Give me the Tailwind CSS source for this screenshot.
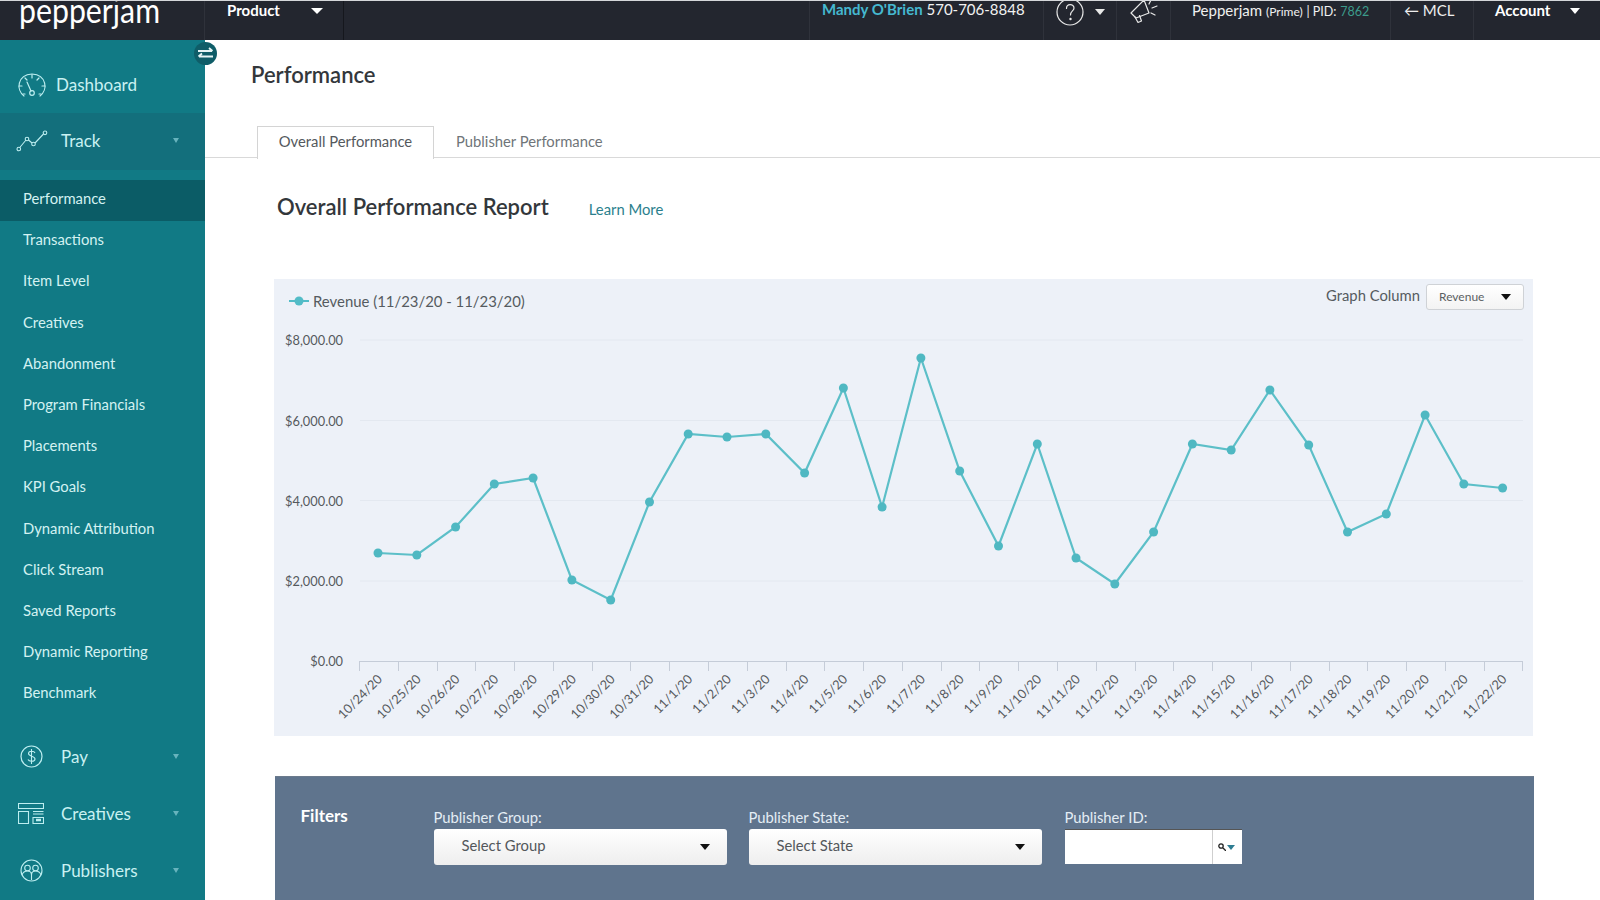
<!DOCTYPE html>
<html lang="en">
<head>
    <meta charset="UTF-8">
    <meta name="viewport" content="width=device-width, initial-scale=1.0">
    <title>Performance - Pepperjam</title>
    <script src="https://cdn.jsdelivr.net/npm/@tailwindcss/browser@4"></script>
</head>
<body class="bg-white h-[900px] overflow-hidden [font-family:Lato,sans-serif] text-[#3c4043]">
    <!-- Top bar -->
    <header class="h-10 bg-[#23262f] border-t border-[#d5d7da] flex items-start text-white overflow-hidden">
        <div class="w-[205px] h-full pl-[19px] shrink-0 border-r border-[#2f323b]">
            <span class="block text-[34px] font-normal leading-none -mt-[8px] scale-x-[0.89] origin-left">pepperjam</span>
        </div>
        <div class="w-[139px] h-full pl-[22px] flex shrink-0 border-r border-[#15171d]">
            <span class="text-[15px] font-bold leading-[18px]">Product</span>
            <span class="ml-[31px] mt-[7px] w-0 h-0 border-x-[6px] border-x-transparent border-t-[6px] border-t-white"></span>
        </div>
        <div class="flex-1"></div>
        <div class="w-[234px] h-full pl-[12px] border-l border-[#2f323b] shrink-0 text-[15px] leading-[16px] whitespace-nowrap">
            <span class="font-bold text-[#45b8d0]">Mandy O'Brien</span> <span class="text-[#f2f2f2]">570-706-8848</span>
        </div>
        <div class="w-[73px] h-full pl-[12px] border-l border-[#2f323b] flex shrink-0">
            <svg class="w-[30px] h-[30px] -mt-[3px]" viewBox="0 0 30 30" fill="none" stroke="#e8e8e8" stroke-width="1.2"><circle cx="14" cy="14" r="13"/><path d="M10.5 10.5c0-5 7.5-5 7.5-.5 0 3-3.5 3-3.5 7" stroke-linecap="round"/><circle cx="14.5" cy="21" r=".6" fill="#e8e8e8"/></svg>
            <span class="ml-[9px] mt-[8px] w-0 h-0 border-x-[5.5px] border-x-transparent border-t-[6px] border-t-[#e8e8e8]"></span>
        </div>
        <div class="w-[54px] h-full pl-[12px] border-l border-[#2f323b] shrink-0">
            <svg class="w-[32px] h-[26px] -mt-[3px]" viewBox="0 0 32 26" fill="none" stroke="#e8e8e8" stroke-width="1.2" stroke-linejoin="round" stroke-linecap="round"><path d="M2 15 15 2l5 13-13 5-5-5Z"/><path d="M6 19l3 5.500 3.500-1.500-2-5.500"/><path d="M20 6l2-4M23 10l5-2M22 15l4 2"/></svg>
        </div>
        <div class="w-[220px] h-full pl-[21px] border-l border-[#2f323b] shrink-0 text-[15px] leading-[18px] whitespace-nowrap text-[#f0f0f0]">
            Pepperjam <span class="text-[12px]">(Prime)</span> <span class="text-[12.5px]">| PID:</span> <span class="text-[12.5px] text-[#3c9b8b]">7862</span>
        </div>
        <div class="w-[83px] h-full pl-[13px] border-l border-[#2f323b] shrink-0 text-[15px] leading-[19px] whitespace-nowrap text-[#eeeeee]">&#8592; MCL</div>
        <div class="w-[127px] h-full pl-[21px] border-l border-[#2f323b] flex whitespace-nowrap shrink-0">
            <span class="text-[15px] font-bold leading-[19px]">Account</span>
            <span class="ml-[20px] mt-[7px] w-0 h-0 border-x-[5.5px] border-x-transparent border-t-[6px] border-t-white"></span>
        </div>
    </header>

    <div class="flex h-[860px]">
        <!-- Sidebar -->
        <aside class="relative w-[205px] shrink-0 bg-[#117a85] text-[#c9f1f2]">
            <span class="absolute -right-[12px] top-[2px] z-10 w-[23px] h-[23px] rounded-full bg-[#0f5d68] flex items-center justify-center">
                <svg class="w-[17px] h-[13px]" viewBox="0 0 17 13" fill="none" stroke="#e6f5f5" stroke-width="1.800"><path d="M1 4h14M12 1l3.500 3M16 9.500H2M5 6.500l-3.500 3"/></svg>
            </span>

            <a class="flex items-center h-[73px] pt-[16px] pl-[17px] text-[17px]">
                <svg class="w-[30px] h-[24px] mr-[9px]" viewBox="0 0 30 24" fill="none" stroke="#bdeef0" stroke-width="1.200" stroke-linecap="round"><path d="M7 23c-8-6-7-21 8-22 15 1 16 16 8 22"/><path d="M15 2v3M8 5l2 2M22 5l-2 2M2 13h3M28 13h-3M10 9l4 9"/><circle cx="15" cy="20" r="2.300"/><path d="M6 21h2M22 21h2"/></svg>
                Dashboard
            </a>
            <a class="flex items-center h-[57px] pb-[2px] pl-[16px] text-[17px] bg-[#136f7c]">
                <svg class="w-[32px] h-[22px] mr-[13px]" viewBox="0 0 32 22" fill="none" stroke="#bdeef0" stroke-width="1.100"><path d="M3.800 17.500 10 10M12.500 10l3.500 3M19 13l8.500-9"/><circle cx="2.800" cy="19" r="1.800"/><circle cx="11" cy="9" r="1.800"/><circle cx="17.500" cy="14" r="1.800"/><circle cx="29" cy="2.800" r="1.800"/></svg>
                Track
                <span class="ml-auto mr-[26px] w-0 h-0 border-x-[3.5px] border-x-transparent border-t-[5px] border-t-[#67b3bd]"></span>
            </a>

            <nav class="pt-[10px] pb-[12.5px] text-[14.8px] text-[#d4f2f2]">
                <a class="flex items-center h-[41.2px] pb-[5px] pl-[23px] bg-[#0b5c66]">Performance</a>
                <a class="flex items-center h-[41.2px] pb-[5px] pl-[23px]">Transactions</a>
                <a class="flex items-center h-[41.2px] pb-[5px] pl-[23px]">Item Level</a>
                <a class="flex items-center h-[41.2px] pb-[5px] pl-[23px]">Creatives</a>
                <a class="flex items-center h-[41.2px] pb-[5px] pl-[23px]">Abandonment</a>
                <a class="flex items-center h-[41.2px] pb-[5px] pl-[23px]">Program Financials</a>
                <a class="flex items-center h-[41.2px] pb-[5px] pl-[23px]">Placements</a>
                <a class="flex items-center h-[41.2px] pb-[5px] pl-[23px]">KPI Goals</a>
                <a class="flex items-center h-[41.2px] pb-[5px] pl-[23px]">Dynamic Attribution</a>
                <a class="flex items-center h-[41.2px] pb-[5px] pl-[23px]">Click Stream</a>
                <a class="flex items-center h-[41.2px] pb-[5px] pl-[23px]">Saved Reports</a>
                <a class="flex items-center h-[41.2px] pb-[5px] pl-[23px]">Dynamic Reporting</a>
                <a class="flex items-center h-[41.2px] pb-[5px] pl-[23px]">Benchmark</a>
            </nav>

            <a class="flex items-center h-[57px] pl-[20px] text-[17px]">
                <svg class="w-[23px] h-[23px] mr-[18px]" viewBox="0 0 23 23" fill="none" stroke="#bdeef0" stroke-width="1.200"><circle cx="11.500" cy="11.500" r="10.500"/><path d="M15 8c-1-2.500-6.500-2.500-6.500.5s6.500 2.500 6.500 5.500-6 3-7 .5M11.500 4v15" stroke-width="1.100"/></svg>
                Pay
                <span class="ml-auto mr-[26px] w-0 h-0 border-x-[3.5px] border-x-transparent border-t-[5px] border-t-[#67b3bd]"></span>
            </a>
            <a class="flex items-center h-[57px] pl-[18px] text-[17px]">
                <svg class="w-[26px] h-[21px] mr-[17px]" viewBox="0 0 26 21" fill="none" stroke="#bdeef0" stroke-width="1.100"><path d="M.5.500h25v5H.5zM.5 8.500h10v12H.5zM15 8.500h10.500M15 11h10.500M15 14.500h10.500v6H15z"/><path d="M18 17h5" stroke-width="2.500"/></svg>
                Creatives
                <span class="ml-auto mr-[26px] w-0 h-0 border-x-[3.5px] border-x-transparent border-t-[5px] border-t-[#67b3bd]"></span>
            </a>
            <a class="flex items-center h-[57px] pl-[20px] text-[17px]">
                <svg class="w-[23px] h-[23px] mr-[18px]" viewBox="0 0 23 23" fill="none" stroke="#bdeef0" stroke-width="1.100"><circle cx="11.500" cy="11.500" r="10.500"/><circle cx="7.500" cy="9" r="2.800"/><circle cx="15.500" cy="9" r="2.800"/><path d="M2 16c1-3 3-4 5.500-4s4 1.500 4 4v5M21 16c-1-3-3-4-5.500-4s-4 1.500-4 4"/></svg>
                Publishers
                <span class="ml-auto mr-[26px] w-0 h-0 border-x-[3.5px] border-x-transparent border-t-[5px] border-t-[#67b3bd]"></span>
            </a>
        </aside>

        <!-- Main content -->
        <main class="flex-1 min-w-0">
            <h1 class="pl-[46px] pt-[20px] text-[22px] leading-[30px] font-semibold text-[#33373b]">Performance</h1>

            <div class="mt-[36px] h-[32px] pl-[52px] flex border-b border-[#d9d9d9] text-[14.8px]">
                <a class="h-[33px] w-[177px] pb-[3px] flex items-center justify-center bg-white border border-b-0 border-[#d4d4d4] text-[#54595d]">Overall Performance</a>
                <a class="h-[32px] ml-[22px] pb-[1px] flex items-center text-[#6f7579]">Publisher Performance</a>
            </div>

            <div class="pl-[72px] pt-[29px] flex items-center h-[65px] mt-[1px]">
                <h2 class="text-[22px] font-semibold text-[#33373b]">Overall Performance Report</h2>
                <a class="ml-[40px] mt-[6px] text-[14.8px] text-[#2b7f8d]">Learn More</a>
            </div>

            <!-- Chart panel -->
            <section class="mt-[55px] ml-[69px] w-[1259px] h-[457px] bg-[#edf1f8]">
                <div class="h-[52px] pl-[15px] pr-[9px] pt-[5px] flex items-start justify-between">
                    <div class="flex items-center mt-[6px] text-[14.9px] text-[#555b60]">
                        <svg class="w-[20px] h-[10px] mr-[4px]" viewBox="0 0 20 10"><path d="M0 5h20" stroke="#52bcc7" stroke-width="2"/><circle cx="10" cy="5" r="4.500" fill="#52bcc7"/></svg>
                        Revenue (11/23/20 - 11/23/20)
                    </div>
                    <div class="flex items-center">
                        <span class="text-[14.8px] text-[#555b60] mr-[6px] -mt-[3px]">Graph Column</span>
                        <div class="w-[98px] h-[26px] pb-[1px] pl-[12px] pr-[12px] flex items-center justify-between bg-gradient-to-b from-white to-[#f3f3f3] border border-[#cfd2d6] rounded-[3px] text-[12px] text-[#5b5f63]">
                            Revenue
                            <span class="w-0 h-0 border-x-[5.5px] border-x-transparent border-t-[6px] border-t-[#111]"></span>
                        </div>
                    </div>
                </div>
                <svg id="chart" class="block w-[1259px] h-[405px]" viewBox="274 331 1259 405"></svg>
            </section>

            <!-- Filters -->
            <section class="mt-[40px] ml-[69.500px] w-[1259px] h-[124px] bg-[#5f748d] border-t border-[#6b7a8c] flex items-start text-white">
                <h3 class="ml-[26px] mt-[29px] w-[133px] text-[17px] leading-[20px] font-bold">Filters</h3>
                <div class="mt-[30px] w-[293px]">
                    <label class="block text-[14.8px] leading-[20px] text-[#e4edf5]">Publisher Group:</label>
                    <div class="h-[36px] mt-[2px] pb-[3px] pl-[28px] pr-[17px] flex items-center justify-between rounded-[3px] bg-gradient-to-b from-white to-[#eeeeee] text-[14.8px] text-[#53575b]">
                        Select Group
                        <span class="mt-[3px] w-0 h-0 border-x-[5.5px] border-x-transparent border-t-[6px] border-t-[#111]"></span>
                    </div>
                </div>
                <div class="mt-[30px] ml-[22px] w-[293px]">
                    <label class="block text-[14.8px] leading-[20px] text-[#e4edf5]">Publisher State:</label>
                    <div class="h-[36px] mt-[2px] pb-[3px] pl-[28px] pr-[17px] flex items-center justify-between rounded-[3px] bg-gradient-to-b from-white to-[#eeeeee] text-[14.8px] text-[#53575b]">
                        Select State
                        <span class="mt-[3px] w-0 h-0 border-x-[5.5px] border-x-transparent border-t-[6px] border-t-[#111]"></span>
                    </div>
                </div>
                <div class="mt-[30px] ml-[23px] w-[177px]">
                    <label class="block text-[14.8px] leading-[20px] text-[#e4edf5]">Publisher ID:</label>
                    <div class="h-[35px] mt-[2px] flex bg-white border-t border-[#555]">
                        <div class="w-[148px] border-r border-[#cfcfcf]"></div>
                        <div class="flex-1 flex items-center pl-[5px]">
                            <svg class="w-[8px] h-[8px]" viewBox="0 0 8 8" fill="none" stroke="#222" stroke-width="1.300"><circle cx="3" cy="3" r="2.200"/><path d="M5 5l3 3"/></svg>
                            <span class="ml-[1px] w-0 h-0 border-x-[4px] border-x-transparent border-t-[5px] border-t-[#2e7d92]"></span>
                        </div>
                    </div>
                </div>
            </section>
        </main>
    </div>

    <script>
        // Chart data, one value per day, in page pixels
        const days = ['10/24/20','10/25/20','10/26/20','10/27/20','10/28/20','10/29/20','10/30/20','10/31/20','11/1/20','11/2/20','11/3/20','11/4/20','11/5/20','11/6/20','11/7/20','11/8/20','11/9/20','11/10/20','11/11/20','11/12/20','11/13/20','11/14/20','11/15/20','11/16/20','11/17/20','11/18/20','11/19/20','11/20/20','11/21/20','11/22/20'];
        const ys = [553,555,527,484,478,580,600,502,434,437,434,473,388,507,358,471,546,444,558,584,532,444,450,390,445,532,514,415,484,488];
        const grid = [['$8,000.00',340],['$6,000.00',420.5],['$4,000.00',500.5],['$2,000.00',581],['$0.00',661]];

        const step = 38.78;
        let out = '';

        grid.forEach(([label, y]) => {
            if (y !== 661) out += `<path d="M360 ${y}H1523" stroke="#e3e8f0"/>`;
            out += `<text x="343" y="${y + 5}" text-anchor="end" font-size="12.8" fill="#55595d">${label}</text>`;
        });

        // x axis and ticks
        out += '<path d="M359 661.500H1523" stroke="#c5ccd8"/>';
        for (let i = 0; i <= 30; i++) {
            const x = Math.round(359 + step * i) + 0.5;
            out += `<path d="M${x} 661V671" stroke="#c5ccd8"/>`;
        }
        days.forEach((d, i) => {
            const x = 378 + step * i + 5;
            out += `<text x="${x}" y="680" text-anchor="end" font-size="12.8" fill="#55595d" transform="rotate(-45 ${x} 680)">${d}</text>`;
        });

        // revenue line
        const pts = ys.map((y, i) => `${(378 + step * i).toFixed(1)},${y}`);
        out += `<polyline points="${pts.join(' ')}" fill="none" stroke="#5cbfc8" stroke-width="2.200"/>`;
        ys.forEach((y, i) => {
            out += `<circle cx="${(378 + step * i).toFixed(1)}" cy="${y}" r="4.500" fill="#4fb8c2"/>`;
        });

        document.getElementById('chart').innerHTML = out;
    </script>
</body>
</html>
